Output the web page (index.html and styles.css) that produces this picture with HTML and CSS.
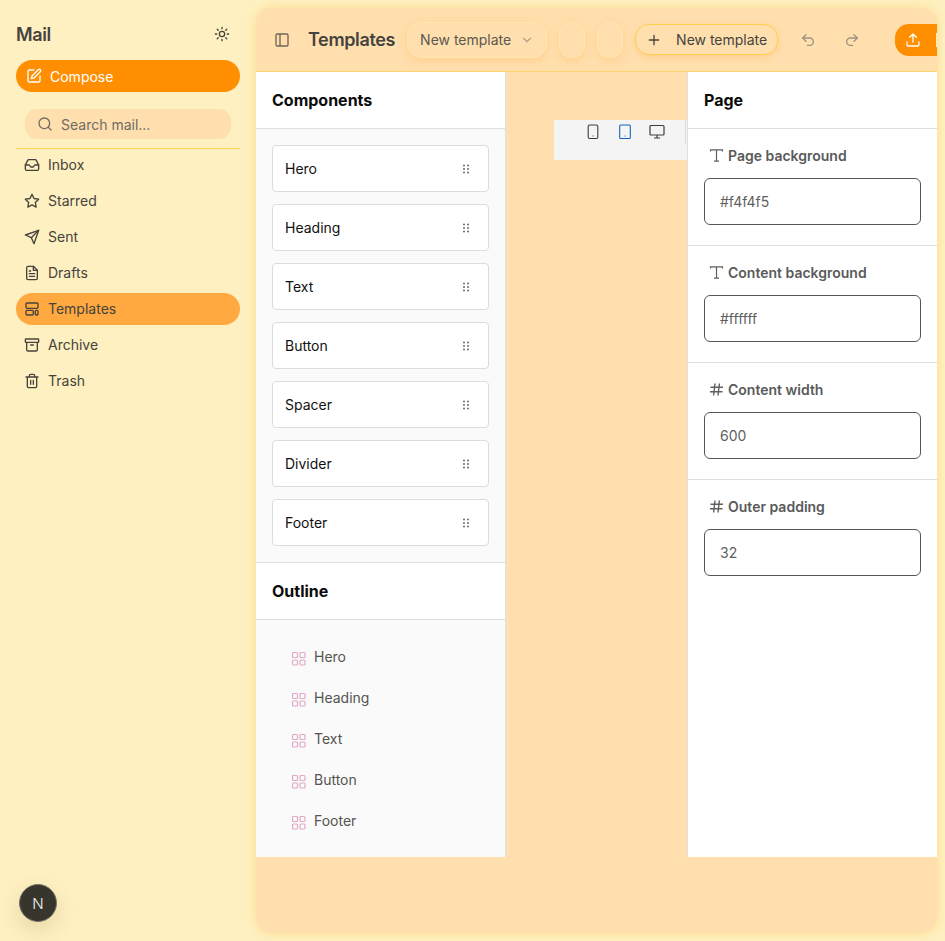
FILE: index.html
```html
<!DOCTYPE html>
<html lang="en">
<head>
    <meta charset="UTF-8">
    <meta name="viewport" content="width=device-width, initial-scale=1.0">
    <title>Templates</title>
    <link rel="stylesheet" href="styles.css">
</head>
<body>
    <svg class="sprites" width="0" height="0">
        <symbol id="grip" viewBox="0 0 16 16"><g fill="currentColor"><circle cx="6" cy="4.500" r="1"/><circle cx="10" cy="4.500" r="1"/><circle cx="6" cy="8" r="1"/><circle cx="10" cy="8" r="1"/><circle cx="6" cy="11.500" r="1"/><circle cx="10" cy="11.500" r="1"/></g></symbol>
        <symbol id="blocks" viewBox="0 0 16 16"><g fill="none" stroke="currentColor" stroke-width="1.200"><rect x="1.500" y="1.500" width="5" height="5" rx="1"/><rect x="9" y="1.500" width="5" height="5" rx="1"/><rect x="1.500" y="9" width="5" height="5" rx="1"/><rect x="9" y="9" width="5" height="5" rx="1"/></g></symbol>
        <symbol id="type" viewBox="0 0 15 15"><path d="M1.500 3.500V1.800h12v1.700M7.500 1.800v11.400M5 13.200h5" fill="none" stroke="currentColor" stroke-width="1.200"/></symbol>
        <symbol id="hash" viewBox="0 0 15 15"><path d="M1.500 5.300h12.500M1 9.700h12.500M6 1.500 4.600 13.500M10.400 1.500 9 13.500" fill="none" stroke="currentColor" stroke-width="1.400"/></symbol>
    </svg>

    <div class="app">
        <aside class="sidebar">
            <div class="brand">
                <span class="brand-name">Mail</span>
                <svg class="icon-16" viewBox="0 0 24 24" fill="none" stroke="currentColor" stroke-width="2" stroke-linecap="round"><circle cx="12" cy="12" r="4"/><path d="M12 2v2M12 20v2M4.900 4.900l1.400 1.400M17.700 17.700l1.400 1.400M2 12h2M20 12h2M4.900 19.100l1.400-1.400M17.700 6.300l1.400-1.400"/></svg>
            </div>
            <button class="compose">
                <svg class="icon-16" viewBox="0 0 24 24" fill="none" stroke="currentColor" stroke-width="2" stroke-linecap="round" stroke-linejoin="round"><path d="M12 3H5a2 2 0 0 0-2 2v14a2 2 0 0 0 2 2h14a2 2 0 0 0 2-2v-7"/><path d="M18.400 2.600a2.100 2.100 0 0 1 3 3L12 15l-4 1 1-4z"/></svg>
                Compose
            </button>
            <div class="search">
                <svg class="icon-16" viewBox="0 0 24 24" fill="none" stroke="currentColor" stroke-width="2" stroke-linecap="round"><circle cx="11" cy="11" r="8"/><path d="m21 21-4.300-4.300"/></svg>
                <span>Search mail...</span>
            </div>
            <nav class="nav">
                <a class="nav-item">
                    <svg class="icon-16" viewBox="0 0 24 24" fill="none" stroke="currentColor" stroke-width="2" stroke-linecap="round" stroke-linejoin="round"><path d="M22 12h-6l-2 3h-4l-2-3H2"/><path d="M5.500 5.100 2 12v6a2 2 0 0 0 2 2h16a2 2 0 0 0 2-2v-6l-3.500-6.900A2 2 0 0 0 16.800 4H7.200a2 2 0 0 0-1.700 1.100z"/></svg>
                    <span>Inbox</span>
                </a>
                <a class="nav-item">
                    <svg class="icon-16" viewBox="0 0 24 24" fill="none" stroke="currentColor" stroke-width="2" stroke-linejoin="round"><path d="m12 2 3.100 6.300 6.900 1-5 4.900 1.200 6.900-6.200-3.300-6.200 3.300L7 14.200 2 9.300l6.900-1z"/></svg>
                    <span>Starred</span>
                </a>
                <a class="nav-item">
                    <svg class="icon-16" viewBox="0 0 24 24" fill="none" stroke="currentColor" stroke-width="2" stroke-linecap="round" stroke-linejoin="round"><path d="M22 2 15 22l-4-9-9-4z"/><path d="M22 2 11 13"/></svg>
                    <span>Sent</span>
                </a>
                <a class="nav-item">
                    <svg class="icon-16" viewBox="0 0 24 24" fill="none" stroke="currentColor" stroke-width="2" stroke-linecap="round" stroke-linejoin="round"><path d="M14 2H6a2 2 0 0 0-2 2v16a2 2 0 0 0 2 2h12a2 2 0 0 0 2-2V8z"/><path d="M14 2v6h6M16 13H8M16 17H8M10 9H8"/></svg>
                    <span>Drafts</span>
                </a>
                <a class="nav-item active">
                    <svg class="icon-16" viewBox="0 0 24 24" fill="none" stroke="currentColor" stroke-width="2" stroke-linejoin="round"><rect x="3" y="3" width="18" height="8" rx="1.500"/><rect x="3" y="14" width="11" height="7" rx="1.500"/><rect x="17" y="14" width="4" height="7" rx="1.500"/></svg>
                    <span>Templates</span>
                </a>
                <a class="nav-item">
                    <svg class="icon-16" viewBox="0 0 24 24" fill="none" stroke="currentColor" stroke-width="2" stroke-linecap="round" stroke-linejoin="round"><rect x="2" y="3" width="20" height="5" rx="1"/><path d="M4 8v11a2 2 0 0 0 2 2h12a2 2 0 0 0 2-2V8M10 12h4"/></svg>
                    <span>Archive</span>
                </a>
                <a class="nav-item">
                    <svg class="icon-16" viewBox="0 0 24 24" fill="none" stroke="currentColor" stroke-width="2" stroke-linecap="round" stroke-linejoin="round"><path d="M3 6h18M19 6v14a2 2 0 0 1-2 2H7a2 2 0 0 1-2-2V6M8 6V4a2 2 0 0 1 2-2h4a2 2 0 0 1 2 2v2M10 11v6M14 11v6"/></svg>
                    <span>Trash</span>
                </a>
            </nav>
            <div class="avatar">N</div>
        </aside>

        <main class="main">
            <header class="topbar">
                <svg class="icon-16 panel-toggle" viewBox="0 0 24 24" fill="none" stroke="currentColor" stroke-width="2"><rect x="3" y="3" width="18" height="18" rx="2"/><path d="M9 3v18"/></svg>
                <h1 class="page-title">Templates</h1>
                <button class="select-pill">
                    New template
                    <svg class="chevron" viewBox="0 0 24 24" fill="none" stroke="currentColor" stroke-width="2" stroke-linecap="round"><path d="m6 9 6 6 6-6"/></svg>
                </button>
                <button class="empty-pill"></button>
                <button class="empty-pill"></button>
                <button class="new-btn">
                    <svg class="icon-16" viewBox="0 0 24 24" fill="none" stroke="currentColor" stroke-width="2" stroke-linecap="round"><path d="M5 12h14M12 5v14"/></svg>
                    New template
                </button>
                <svg class="icon-16 history undo" viewBox="0 0 24 24" fill="none" stroke="currentColor" stroke-width="2" stroke-linecap="round" stroke-linejoin="round"><path d="M9 14 4 9l5-5"/><path d="M4 9h10.500a5.500 5.500 0 0 1 0 11H11"/></svg>
                <svg class="icon-16 history redo" viewBox="0 0 24 24" fill="none" stroke="currentColor" stroke-width="2" stroke-linecap="round" stroke-linejoin="round"><path d="m15 14 5-5-5-5"/><path d="M20 9H9.500a5.500 5.500 0 0 0 0 11H13"/></svg>
                <button class="export-btn">
                    <svg class="icon-16" viewBox="0 0 24 24" fill="none" stroke="currentColor" stroke-width="2" stroke-linecap="round" stroke-linejoin="round"><path d="M21 15v4a2 2 0 0 1-2 2H5a2 2 0 0 1-2-2v-4M17 8l-5-5-5 5M12 3v12"/></svg>
                    <span class="export-label"></span>
                </button>
            </header>

            <div class="workspace">
                <section class="left-panel">
                    <h2 class="panel-title">Components</h2>
                    <div class="component-list">
                        <div class="component">Hero <svg class="grip"><use href="#grip"/></svg></div>
                        <div class="component">Heading <svg class="grip"><use href="#grip"/></svg></div>
                        <div class="component">Text <svg class="grip"><use href="#grip"/></svg></div>
                        <div class="component">Button <svg class="grip"><use href="#grip"/></svg></div>
                        <div class="component">Spacer <svg class="grip"><use href="#grip"/></svg></div>
                        <div class="component">Divider <svg class="grip"><use href="#grip"/></svg></div>
                        <div class="component">Footer <svg class="grip"><use href="#grip"/></svg></div>
                    </div>
                    <h2 class="panel-title">Outline</h2>
                    <div class="outline">
                        <div class="outline-item"><svg class="blocks"><use href="#blocks"/></svg>Hero</div>
                        <div class="outline-item"><svg class="blocks"><use href="#blocks"/></svg>Heading</div>
                        <div class="outline-item"><svg class="blocks"><use href="#blocks"/></svg>Text</div>
                        <div class="outline-item"><svg class="blocks"><use href="#blocks"/></svg>Button</div>
                        <div class="outline-item"><svg class="blocks"><use href="#blocks"/></svg>Footer</div>
                    </div>
                </section>

                <section class="canvas">
                    <div class="device-bar">
                        <svg class="device" viewBox="0 0 14 16" fill="none" stroke="currentColor" stroke-width="1.100"><rect x="2.200" y="1" width="9.600" height="13.500" rx="1.500"/><path d="M6.500 12h1"/></svg>
                        <svg class="device selected" viewBox="0 0 14 16" fill="none" stroke="currentColor" stroke-width="1.100"><rect x="1.700" y="1" width="10.600" height="13.500" rx="1"/><path d="M6.500 12h1"/></svg>
                        <svg class="device wide" viewBox="0 0 16 16" fill="none" stroke="currentColor" stroke-width="1.200"><rect x="1" y="1.500" width="14" height="9.500" rx="1"/><path d="M8 11v3M5 14h6"/></svg>
                        <span class="device-sep"></span>
                    </div>
                </section>

                <section class="right-panel">
                    <h2 class="panel-title">Page</h2>
                    <div class="field">
                        <label class="field-label"><svg class="label-icon"><use href="#type"/></svg>Page background</label>
                        <div class="field-input">#f4f4f5</div>
                    </div>
                    <div class="field">
                        <label class="field-label"><svg class="label-icon"><use href="#type"/></svg>Content background</label>
                        <div class="field-input">#ffffff</div>
                    </div>
                    <div class="field">
                        <label class="field-label"><svg class="label-icon"><use href="#hash"/></svg>Content width</label>
                        <div class="field-input">600</div>
                    </div>
                    <div class="field">
                        <label class="field-label"><svg class="label-icon"><use href="#hash"/></svg>Outer padding</label>
                        <div class="field-input">32</div>
                    </div>
                </section>
            </div>
        </main>
    </div>
</body>
</html>
```

FILE: styles.css
```css
* {
    box-sizing: border-box;
}
body {
    margin: 0;
    height: 941px;
    overflow: hidden;
    font-family: Inter, "Liberation Sans", sans-serif;
    font-size: 14px;
    color: #45433e;
    background-color: #fef0c0;
}
button {
    font: inherit;
    color: inherit;
    border: none;
    padding: 0;
}
.sprites {
    position: absolute;
}
.icon-16 {
    width: 16px;
    height: 16px;
    flex: none;
}
.app {
    display: flex;
    height: 100%;
}

/* sidebar */
.sidebar {
    position: relative;
    width: 256px;
    flex: none;
    padding: 0 16px;
}
.brand {
    display: flex;
    align-items: center;
    justify-content: space-between;
    height: 60px;
    padding: 8px 10px 0 0;
}
.brand-name {
    font-size: 18px;
    font-weight: 600;
    letter-spacing: -0.02em;
}
.compose {
    display: flex;
    align-items: center;
    gap: 8px;
    width: 100%;
    height: 32px;
    padding: 0 10px;
    border-radius: 16px;
    color: #fff;
    background-color: #ff8f00;
}
.search {
    display: flex;
    align-items: center;
    gap: 8px;
    height: 30px;
    margin: 17px 9px 9px;
    padding: 0 12px;
    border-radius: 12px;
    color: #6f6c66;
    background-color: #ffdfae;
}
.nav {
    display: flex;
    flex-direction: column;
    gap: 4px;
    border-top: 1px solid #fdd550;
}
.nav-item {
    display: flex;
    align-items: center;
    gap: 8px;
    height: 32px;
    padding: 0 8px;
    border-radius: 16px;
}
.nav-item span {
    margin-bottom: 2px;
}
.nav-item.active {
    background-color: #ffa940;
}
.avatar {
    position: absolute;
    left: 19px;
    top: 884px;
    width: 38px;
    height: 38px;
    display: flex;
    align-items: center;
    justify-content: center;
    border-radius: 50%;
    border: 1px solid #77746a;
    color: #f4f4f0;
    font-size: 15px;
    font-weight: 300;
    background-color: #38352c;
    box-shadow: 0 8px 20px rgba(90, 80, 40, 0.15);
}

/* main */
.main {
    display: flex;
    flex-direction: column;
    width: 681px;
    height: 925px;
    margin-top: 8px;
    border-radius: 16px;
    overflow: hidden;
    background-color: #ffdfae;
    box-shadow: 0 0 10px rgba(255, 205, 110, 0.6);
}
.topbar {
    display: flex;
    align-items: center;
    height: 64px;
    flex: none;
    padding: 0 0 0 18px;
    border-bottom: 1px solid #fdd36a;
}
.topbar > * {
    flex: none;
}
.panel-toggle {
    color: #6f6558;
}
.page-title {
    margin: 0 12px 0 18px;
    font-size: 18px;
    font-weight: 600;
    letter-spacing: -0.02em;
}
.select-pill {
    display: flex;
    align-items: center;
    justify-content: space-between;
    width: 140px;
    height: 36px;
    padding: 0 12px 0 12px;
    border-radius: 14px;
    color: #5c5850;
    white-space: nowrap;
    background-color: #ffdfae;
    border: 1px solid #ffe7ae;
    box-shadow: 0 3px 8px rgba(255, 180, 80, 0.35);
}
.chevron {
    width: 14px;
    height: 14px;
    color: #a89c88;
}
.empty-pill {
    width: 26px;
    height: 36px;
    margin-left: 12px;
    border-radius: 12px;
    background-color: #ffdfae;
    border: 1px solid #ffe7ae;
    box-shadow: 0 3px 8px rgba(255, 180, 80, 0.35);
}
.new-btn {
    display: flex;
    align-items: center;
    gap: 14px;
    width: 143px;
    height: 31px;
    margin-left: 12px;
    padding: 0 10px;
    border-radius: 14px;
    color: #45433e;
    white-space: nowrap;
    background-color: #ffdfae;
    border: 1px solid #fdd04f;
    box-shadow: 0 2px 6px rgba(255, 180, 80, 0.4);
}
.history {
    color: #9d9384;
}
.undo {
    margin-left: 22px;
}
.redo {
    margin-left: 28px;
}
.export-btn {
    display: flex;
    align-items: center;
    gap: 15px;
    width: 42px;
    height: 32px;
    margin-left: 35px;
    padding-left: 10px;
    border-radius: 14px 0 0 14px;
    color: #fff;
    background-color: #ff8f00;
}
.export-label {
    width: 2px;
    height: 14px;
    flex: none;
    background-color: #ffe7c0;
}
.workspace {
    display: flex;
    height: 785px;
    flex: none;
}
.panel-title {
    display: flex;
    align-items: center;
    height: 57px;
    margin: 0;
    padding: 0 16px;
    font-size: 16px;
    font-weight: 700;
    color: #0b0b0b;
    background-color: #fff;
    border-bottom: 1px solid #e0e0e0;
}

/* left panel */
.left-panel {
    width: 250px;
    flex: none;
    background-color: #fafafa;
    border-right: 1px solid #e0e0e0;
}
.component-list {
    display: flex;
    flex-direction: column;
    gap: 12px;
    padding: 16px;
    border-bottom: 1px solid #e0e0e0;
}
.component {
    display: flex;
    align-items: center;
    justify-content: space-between;
    height: 47px;
    padding: 0 14px 0 12px;
    border: 1px solid #dcdcdc;
    border-radius: 4px;
    color: #111;
    background-color: #fff;
}
.grip {
    width: 16px;
    height: 16px;
    color: #6b6b6b;
}
.outline {
    display: flex;
    flex-direction: column;
    gap: 13px;
    padding: 22px 0 0 35px;
}
.outline-item {
    display: flex;
    align-items: center;
    gap: 7px;
    height: 28px;
    color: #55534f;
}
.blocks {
    width: 16px;
    height: 16px;
    margin-top: 5px;
    color: #e2a8c8;
}

/* canvas */
.canvas {
    flex: 1;
    padding: 48px 0 0 48px;
}
.device-bar {
    position: relative;
    display: flex;
    align-items: flex-start;
    gap: 16px;
    height: 40px;
    padding-left: 31px;
    color: #3c3c3c;
    background-color: #f4f4f5;
}
.device {
    width: 16px;
    height: 16px;
    margin-top: 4px;
}
.device.selected {
    color: #1565c0;
}
.device-sep {
    position: absolute;
    right: 1px;
    top: 0;
    width: 1px;
    height: 24px;
    background-color: #dcdcdc;
}

/* right panel */
.right-panel {
    width: 250px;
    flex: none;
    background-color: #fff;
    border-left: 1px solid #e0e0e0;
}
.field {
    height: 117px;
    padding: 16px;
    border-bottom: 1px solid #e0e0e0;
}
.field:last-child {
    border-bottom: none;
}
.field-label {
    display: flex;
    align-items: center;
    gap: 4px;
    height: 21px;
    margin-bottom: 12px;
    padding-left: 5px;
    font-weight: 600;
    color: #5a5a5a;
}
.label-icon {
    width: 15px;
    height: 15px;
    flex: none;
    color: #5f5f5f;
}
.field-input {
    display: flex;
    align-items: center;
    height: 47px;
    padding: 0 15px;
    border: 1px solid #555;
    border-radius: 6px;
    color: #5f5f5f;
}
```
